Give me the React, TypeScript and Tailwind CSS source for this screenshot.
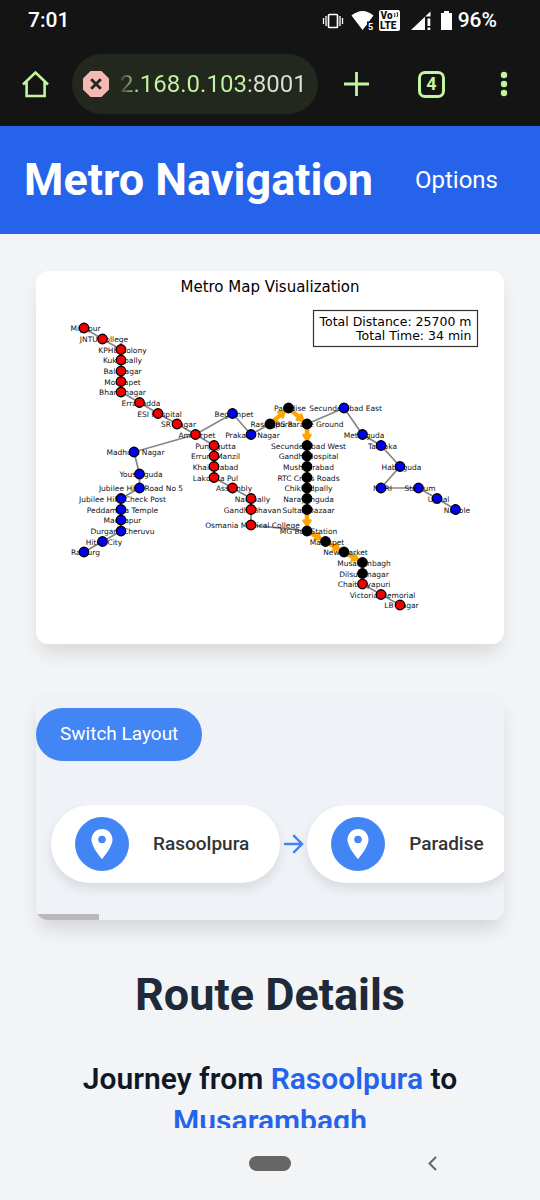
import React from "react";
import { MdLocationOn } from "react-icons/md";

type Kind = "red" | "blue" | "black";
type Station = [name: string, x: number, y: number, kind: Kind];

const stations: Station[] = [
  ["Miyapur", 168, 656, "red"],
  ["JNTU College", 205, 678, "red"],
  ["KPHB Colony", 242, 699, "red"],
  ["Kukatpally", 242, 720, "red"],
  ["Balanagar", 242, 742, "red"],
  ["Moosapet", 242, 763, "red"],
  ["Bharatnagar", 242, 784, "red"],
  ["Erragadda", 279, 805, "red"],
  ["ESI Hospital", 316, 827, "red"],
  ["SR Nagar", 354, 848, "red"],
  ["Ameerpet", 391, 869, "red"],
  ["Punjagutta", 428, 891, "red"],
  ["Errum Manzil", 428, 912, "red"],
  ["Khairatabad", 428, 933, "red"],
  ["Lakdi Ka Pul", 428, 955, "red"],
  ["Assembly", 465, 976, "red"],
  ["Nampally", 502, 997, "red"],
  ["Gandhi Bhavan", 502, 1019, "red"],
  ["Osmania Medical College", 502, 1050, "red"],
  ["MG Bus Station", 614, 1062, "black"],
  ["Malakpet", 651, 1083, "black"],
  ["New Market", 688, 1104, "black"],
  ["Musarambagh", 725, 1125, "black"],
  ["Dilsukhnagar", 725, 1147, "black"],
  ["Chaitanyapuri", 725, 1168, "red"],
  ["Victoria Memorial", 762, 1189, "red"],
  ["LB Nagar", 800, 1210, "red"],
  ["Raidurg", 168, 1104, "blue"],
  ["Hitec City", 205, 1083, "blue"],
  ["Durgam Cheruvu", 242, 1062, "blue"],
  ["Madhapur", 242, 1040, "blue"],
  ["Peddamma Temple", 242, 1019, "blue"],
  ["Jubilee Hills Check Post", 242, 997, "blue"],
  ["Jubilee Hills Road No 5", 279, 976, "blue"],
  ["Yousufguda", 279, 948, "blue"],
  ["Madhura Nagar", 268, 904, "blue"],
  ["Begumpet", 465, 827, "blue"],
  ["Prakash Nagar", 502, 869, "blue"],
  ["Rasoolpura", 540, 848, "black"],
  ["Paradise", 577, 816, "black"],
  ["JBS Parade Ground", 614, 848, "black"],
  ["Secunderabad East", 688, 816, "blue"],
  ["Mettuguda", 725, 869, "blue"],
  ["Tarnaka", 762, 891, "blue"],
  ["Habsiguda", 800, 933, "blue"],
  ["NGRI", 762, 976, "blue"],
  ["Stadium", 837, 976, "blue"],
  ["Uppal", 874, 997, "blue"],
  ["Nagole", 911, 1019, "blue"],
  ["Secunderabad West", 614, 891, "black"],
  ["Gandhi Hospital", 614, 912, "black"],
  ["Musheerabad", 614, 933, "black"],
  ["RTC Cross Roads", 614, 955, "black"],
  ["Chikkadpally", 614, 976, "black"],
  ["Narayanguda", 614, 997, "black"],
  ["Sultan Bazaar", 614, 1019, "black"],
];

const route = [
  "Rasoolpura",
  "Paradise",
  "JBS Parade Ground",
  "Secunderabad West",
  "Gandhi Hospital",
  "Musheerabad",
  "RTC Cross Roads",
  "Chikkadpally",
  "Narayanguda",
  "Sultan Bazaar",
  "MG Bus Station",
  "Malakpet",
  "New Market",
  "Musarambagh",
];

const tracks = [
  "168,656 205,678 242,699 242,784 279,805 316,827 354,848 391,869 428,891 428,955 465,976 502,997 502,1050 614,1062 651,1083 688,1104 725,1125 725,1168 762,1189 800,1210",
  "168,1104 205,1083 242,1062 242,997 279,976 279,948 268,904 391,869 465,827 502,869 540,848 577,816 614,848 688,816 725,869 762,891 800,933 762,976 837,976 874,997 911,1019",
  "614,848 614,1062",
];

const fills: Record<Kind, string> = { red: "#f20000", blue: "#0000f0", black: "#000000" };

function RouteArrow({ from, to }: { from: Station; to: Station }) {
  const dx = to[1] - from[1];
  const dy = to[2] - from[2];
  const len = Math.hypot(dx, dy);
  const ux = dx / len;
  const uy = dy / len;
  const tipX = to[1] - ux * 10;
  const tipY = to[2] - uy * 10;
  const baseX = tipX - ux * 11;
  const baseY = tipY - uy * 11;
  return (
    <g fill="#ffa500" stroke="#ffa500">
      <line x1={from[1]} y1={from[2]} x2={baseX} y2={baseY} strokeWidth="9" />
      <polygon
        strokeWidth="5"
        strokeLinejoin="round"
        points={`${tipX},${tipY} ${baseX - uy * 7},${baseY + ux * 7} ${baseX + uy * 7},${baseY - ux * 7}`}
      />
    </g>
  );
}

function MetroMap() {
  const byName = (name: string) => stations.find((s) => s[0] === name)!;
  return (
    <svg
      viewBox="72 542 936 746"
      role="img"
      aria-label="Metro Map Visualization"
      className="block w-full font-['DejaVu_Sans',sans-serif]"
    >
      <text x="540" y="584" fontSize="30" textAnchor="middle">Metro Map Visualization</text>
      <rect x="627" y="621" width="328" height="72" fill="#fff" stroke="#333" strokeWidth="2.4" />
      <text x="943" y="652" fontSize="25" textAnchor="end">Total Distance: 25700 m</text>
      <text x="943" y="680" fontSize="25" textAnchor="end">Total Time: 34 min</text>
      {tracks.map((points) => (
        <polyline key={points} points={points} fill="none" stroke="#868686" strokeWidth="3.4" />
      ))}
      {route.slice(1).map((name, i) => (
        <RouteArrow key={name} from={byName(route[i])} to={byName(name)} />
      ))}
      {stations.map(([name, x, y]) => (
        <text key={name} x={x + 3} y={y + 6} fontSize="15" textAnchor="middle" fill="#111">
          {name}
        </text>
      ))}
      {stations.map(([name, x, y, kind]) => (
        <circle key={name} cx={x} cy={y} r="9.5" fill={fills[kind]} stroke="#000" strokeWidth="2.6" />
      ))}
    </svg>
  );
}

function StatusBar() {
  return (
    <div className="flex h-[42px] items-center justify-between pl-7 pr-[43px] text-[21px] font-medium text-white">
      <span>7:01</span>
      <div className="flex items-center">
        <svg width="136" height="24" viewBox="322 9 136 24" aria-hidden="true" fill="#fff">
          <rect x="328.5" y="14.5" width="9" height="13" rx="1" fill="none" stroke="#fff" strokeWidth="1.7" />
          <path d="M323.5 18v6M326 16v10M340 16v10M342.5 18v6" stroke="#fff" strokeWidth="1.3" />
          <path d="M351.5 15.5q11-9 22 0L369 21.5h-2v3l-4.5 5.5z" />
          <text x="368" y="30" fontSize="9" fontWeight="700">5</text>
          <rect x="379" y="10" width="21" height="21" rx="2" />
          <g fill="#141414" fontWeight="900">
            <text x="380.5" y="19" fontSize="10">Vo</text>
            <text x="380" y="29" fontSize="10">LTE</text>
          </g>
          <path d="M394.5 13q1 2 0 4M397 12q1.500 3 0 5" fill="none" stroke="#141414" strokeWidth="1" />
          <path d="M411 30L430.500 11.500V16.500h-5.500v13.500z" />
          <path d="M427.500 18.500h2.800v7.500h-2.800zM427.500 27.500h2.800V30h-2.800z" />
          <path d="M441 13h3v-2h5v2h3v17h-11z" />
        </svg>
        <span>96%</span>
      </div>
    </div>
  );
}

function BrowserBar() {
  return (
    <div className="flex h-[84px] items-center pl-[22px] pr-8 text-[#c3f5a0]">
      <button type="button" aria-label="Home" className="shrink-0">
        <svg width="28" height="28" viewBox="0 0 28 28" fill="none" stroke="currentColor" strokeWidth="2.6">
          <path d="M1 14.5L13.500 2.500L26 14.500M4.600 12V26H22.600V12" />
        </svg>
      </button>
      <div className="ml-[22px] flex h-[60px] min-w-0 flex-1 items-center rounded-full bg-[#23281f] pl-[11px] pr-3">
        <svg width="26" height="26" viewBox="0 0 26 26" aria-hidden="true" className="mr-[11px] shrink-0">
          <path d="M7.500 0h11L26 7.500v11L18.500 26h-11L0 18.500v-11z" fill="#f4b8b5" />
          <path d="M8.200 8.200l9.600 9.600M17.800 8.200l-9.600 9.600" stroke="#23281f" strokeWidth="2.8" />
        </svg>
        <input
          type="text"
          aria-label="Address"
          defaultValue="2.168.0.103:8001"
          className="w-full min-w-0 bg-[linear-gradient(90deg,#3c4534_0px,#c3f5a0_20px,#c3f5a0_126px,#dbe2d2_126px)] bg-clip-text text-2xl text-transparent outline-none"
        />
      </div>
      <button type="button" aria-label="New tab" className="ml-[26px] shrink-0">
        <svg width="25" height="24" viewBox="0 0 25 24" stroke="currentColor" strokeWidth="2.8">
          <path d="M0 12h25M12.500 0v24" />
        </svg>
      </button>
      <button
        type="button"
        aria-label="Open tabs"
        className="ml-[49px] flex size-[27px] shrink-0 items-center justify-center rounded-[7px] border-[3px] border-current text-lg font-bold"
      >
        4
      </button>
      <button type="button" aria-label="More" className="ml-[55px] shrink-0">
        <svg width="8" height="26" viewBox="0 0 8 26" fill="currentColor">
          <circle cx="4" cy="4" r="3.2" />
          <circle cx="4" cy="13" r="3.2" />
          <circle cx="4" cy="22" r="3.2" />
        </svg>
      </button>
    </div>
  );
}

function Stop({ name }: { name: string }) {
  return (
    <li className="flex h-[78px] shrink-0 items-center gap-6 rounded-full bg-white pl-6 pr-[31px] shadow-[0_6px_12px_rgba(0,0,0,0.1)]">
      <span className="flex size-[54px] items-center justify-center rounded-full bg-[#4285f4] text-white">
        <MdLocationOn size={36} />
      </span>
      <span className="text-[19px] font-medium text-[#333]">{name}</span>
    </li>
  );
}

export default function App() {
  return (
    <div className="flex h-screen flex-col bg-gray-100 font-['Roboto',sans-serif]">
      <div className="shrink-0 bg-[#141414]">
        <StatusBar />
        <BrowserBar />
      </div>
      <main className="min-h-0 flex-1 overflow-hidden">
        <header className="flex h-[108px] items-center justify-between bg-[#2563eb] pl-6 pr-[42px] text-white">
          <h1 className="text-[45px] font-bold">Metro Navigation</h1>
          <button type="button" className="text-2xl">Options</button>
        </header>
        <div className="px-9 pt-[37px]">
          <section className="overflow-hidden rounded-xl bg-white shadow-[0_12px_20px_-4px_rgba(0,0,0,0.12)]">
            <MetroMap />
          </section>
          <section className="mt-12 overflow-hidden rounded-xl bg-[#eff3f8] pt-4 shadow-[0_12px_20px_-4px_rgba(0,0,0,0.14)]">
            <button type="button" className="block h-[53px] rounded-full bg-[#4285f4] px-6 text-[19px] text-white">
              Switch Layout
            </button>
            <ol className="mt-11 flex items-center overflow-hidden pb-[31px] pl-[15px]">
              <Stop name="Rasoolpura" />
              <li aria-hidden="true" className="shrink-0 text-[#4285f4]">
                <svg width="27" height="24" viewBox="0 0 27 24" fill="none" stroke="currentColor" strokeWidth="2.5">
                  <path strokeLinecap="round" d="M5 12H21.500M14 3.800L22 12L14 20.200" />
                </svg>
              </li>
              <Stop name="Paradise" />
            </ol>
            <div className="h-1.5 w-[63px] bg-[#bababc]" />
          </section>
          <h2 className="mt-12 text-center text-[45px] font-bold leading-[54px] text-gray-800">Route Details</h2>
          <h3 className="mt-9 text-center text-[30px] font-semibold leading-[42px] text-gray-900">
            Journey from <span className="text-[#2563eb]">Rasoolpura</span> to{" "}
            <span className="text-[#2563eb]">Musarambagh</span>
          </h3>
        </div>
      </main>
      <nav className="grid h-[72px] shrink-0 grid-cols-5 items-center justify-items-center pb-0.5">
        <button type="button" aria-label="Home screen" className="col-start-3 h-[15px] w-[42px] rounded-full bg-[#666]" />
        <button type="button" aria-label="Back" className="col-span-2 col-start-4 text-[#666]">
          <svg width="9" height="15" viewBox="0 0 9 15" fill="none" stroke="currentColor" strokeWidth="2">
            <path d="M8 1L1.500 7.500L8 14" />
          </svg>
        </button>
      </nav>
    </div>
  );
}
